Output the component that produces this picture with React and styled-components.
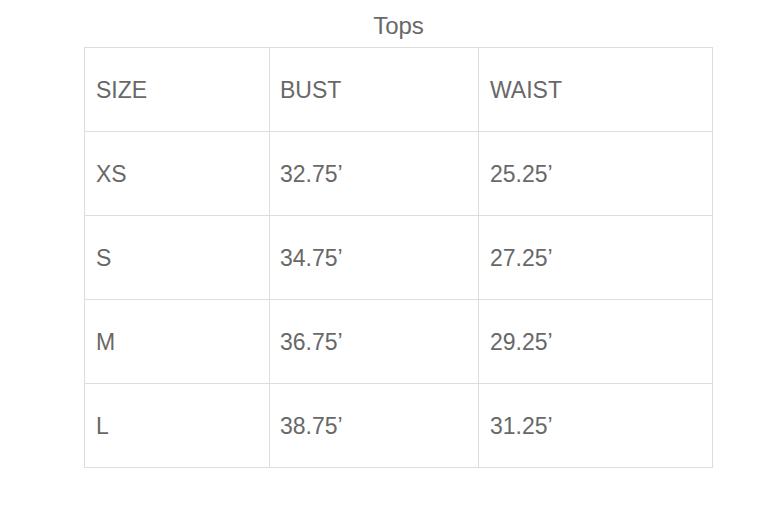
import React from "react";
import styled, { createGlobalStyle } from "styled-components";

const GlobalStyle = createGlobalStyle`
  body {
    margin: 0;
    background: #fff;
    font-family: "Liberation Sans", Arial, Helvetica, sans-serif;
  }
`;

const rows = [
  ["SIZE", "BUST", "WAIST"],
  ["XS", "32.75’", "25.25’"],
  ["S", "34.75’", "27.25’"],
  ["M", "36.75’", "29.25’"],
  ["L", "38.75’", "31.25’"],
];

const widths = [185, 209, 234];
const pads = [11, 10, 11];

const App = () => {
  return (
    <>
      <GlobalStyle />
      <Wrapper>
        <Table>
          <Caption>Tops</Caption>
          <colgroup>
            {widths.map((w, i) => (
              <col key={i} style={{ width: w }} />
            ))}
          </colgroup>
          <tbody>
            {rows.map((row, i) => (
              <Row key={i}>
                {row.map((cell, j) => (
                  <Cell key={j} $pad={pads[j]}>
                    {cell}
                  </Cell>
                ))}
              </Row>
            ))}
          </tbody>
        </Table>
      </Wrapper>
    </>
  );
};

export default App;

const Wrapper = styled.div`
  padding-left: 84px;
`;
const Table = styled.table`
  width: 628px;
  border-collapse: collapse;
  table-layout: fixed;
  color: #686868;
  font-size: 23px;
`;
const Caption = styled.caption`
  font-size: 24px;
  line-height: 26px;
  padding-top: 13px;
  padding-bottom: 8px;
  color: #686868;
`;
const Row = styled.tr`
  height: 84px;
`;
const Cell = styled.td`
  border: 1px solid #dddddd;
  padding: 0 ${(p) => p.$pad}px;
  vertical-align: middle;
  line-height: 26px;
`;
